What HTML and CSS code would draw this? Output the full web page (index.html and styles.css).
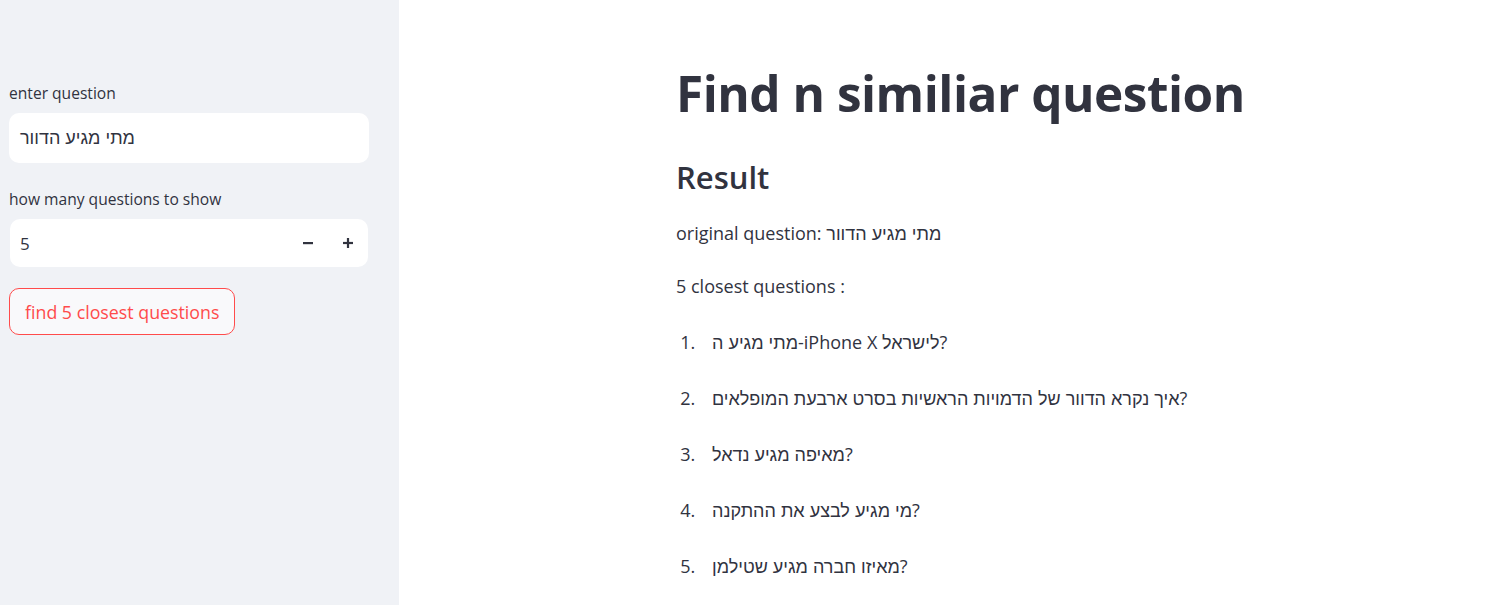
FILE: index.html
```html
<!DOCTYPE html>
<html lang="en">
<head>
<meta charset="utf-8">
<title>Find n similiar question</title>
<link rel="stylesheet" href="styles.css">
</head>
<body>
<div class="app">
  <aside class="sidebar">
    <div class="field">
      <label class="label">enter question</label>
      <div class="input-box"><span class="input-text he">מתי מגיע הדוור</span></div>
    </div>
    <div class="field">
      <label class="label">how many questions to show</label>
      <div class="input-box number-box">
        <span class="input-text num">5</span>
        <div class="steppers">
          <span class="step">
            <svg width="12" height="12" viewBox="0 0 12 12"><rect x="1" y="5" width="10" height="2.2" fill="#31333f"/></svg>
          </span>
          <span class="step">
            <svg width="12" height="12" viewBox="0 0 12 12"><rect x="1" y="4.9" width="10" height="2.2" fill="#31333f"/><rect x="4.9" y="1" width="2.2" height="10" fill="#31333f"/></svg>
          </span>
        </div>
      </div>
    </div>
    <button class="btn">find 5 closest questions</button>
  </aside>
  <main class="main">
    <div class="content">
      <h1 class="title">Find n similiar question</h1>
      <h3 class="subtitle">Result</h3>
      <p class="para">original question: <span class="he">מתי מגיע הדוור</span></p>
      <p class="para">5 closest questions :</p>
      <ol class="results">
        <li><span class="he">מתי מגיע ה</span>-iPhone X <span class="he">לישראל</span>?</li>
        <li><span class="he">איך נקרא הדוור של הדמויות הראשיות בסרט ארבעת המופלאים</span>?</li>
        <li><span class="he">מאיפה מגיע נדאל</span>?</li>
        <li><span class="he">מי מגיע לבצע את ההתקנה</span>?</li>
        <li><span class="he">מאיזו חברה מגיע שטילמן</span>?</li>
      </ol>
    </div>
  </main>
</div>
</body>
</html>
```

FILE: styles.css
```css
* { box-sizing: border-box; }
html, body {
  margin: 0;
  padding: 0;
  height: 100%;
}
body {
  font-family: "Open Sans", "Liberation Sans", sans-serif;
  color: #31333f;
  background: #ffffff;
  overflow: hidden;
}
.he {
  font-family: "Liberation Sans", "Open Sans", sans-serif;
}
.app {
  display: flex;
  height: 605px;
}
.sidebar {
  width: 399px;
  flex: none;
  background: #f0f2f6;
  padding: 82px 30px 0 9px;
  display: flex;
  flex-direction: column;
}
.field {
  display: flex;
  flex-direction: column;
  margin-bottom: 21px;
}
.field + .field {
  margin-top: 4px;
}
.label {
  font-size: 15.6px;
  line-height: 22px;
  margin-bottom: 9px;
}
.input-box {
  height: 50px;
  background: #ffffff;
  border-radius: 10px;
  display: flex;
  align-items: center;
  padding: 0 11px;
}
.input-text {
  font-size: 18px;
}
.number-box {
  height: 48px;
  padding-right: 0;
  padding-left: 10px;
  margin-left: 1px;
  margin-right: 1px;
}
.num {
  font-size: 17px;
  flex: 1;
}
.steppers {
  display: flex;
}
.step {
  width: 40px;
  height: 36px;
  display: flex;
  align-items: center;
  justify-content: center;
}
.btn {
  align-self: flex-start;
  font-family: "Open Sans", sans-serif;
  font-size: 17.8px;
  color: #ff4b4b;
  background: #f9f9fb;
  border: 1px solid #ff4b4b;
  border-radius: 10px;
  height: 47px;
  padding: 0 15px;
}
.main {
  flex: 1;
  padding-left: 277px;
}
.content {
  padding-top: 57px;
}
.title {
  font-size: 49.5px;
  font-weight: 700;
  line-height: 72px;
  margin: 0 0 26px 0;
  letter-spacing: -0.5px;
}
.subtitle {
  font-size: 31px;
  font-weight: 600;
  line-height: 44px;
  margin: 0 0 19px 0;
}
.para {
  font-size: 18px;
  line-height: 30px;
  margin: 0 0 22px 0;
}
.results {
  margin: 0;
  padding: 4px 0 0 24px;
  font-size: 18px;
}
.results li {
  height: 30px;
  line-height: 30px;
  margin-bottom: 26px;
  padding-left: 12px;
}
```
